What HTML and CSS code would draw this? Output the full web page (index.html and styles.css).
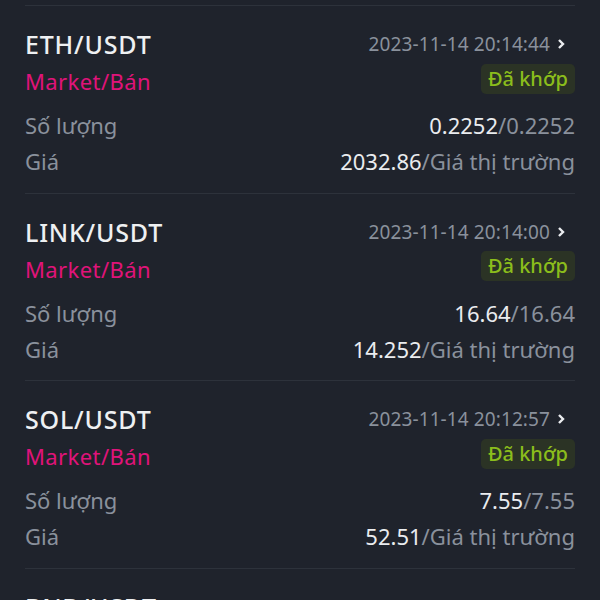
FILE: index.html
```html
<!DOCTYPE html>
<html lang="vi">
<head>
    <meta charset="UTF-8">
    <meta name="viewport" content="width=device-width, initial-scale=1.0">
    <title>Lịch sử lệnh</title>
    <link rel="stylesheet" href="styles.css">
</head>
<body>
    <div class="order-list">
        <div class="order">
            <div class="order-head">
                <span class="pair">ETH/USDT</span>
                <span class="time">2023-11-14 20:14:44 <svg class="chev" viewBox="0 0 10 12"><path d="M3 2l4 4-4 4" /></svg></span>
            </div>
            <div class="order-row">
                <span class="side">Market/Bán</span>
                <span class="badge">Đã khớp</span>
            </div>
            <div class="order-row info">
                <span class="label">Số lượng</span>
                <span class="value">0.2252<em>/0.2252</em></span>
            </div>
            <div class="order-row info">
                <span class="label">Giá</span>
                <span class="value">2032.86<em>/Giá thị trường</em></span>
            </div>
        </div>
        <div class="order">
            <div class="order-head">
                <span class="pair">LINK/USDT</span>
                <span class="time">2023-11-14 20:14:00 <svg class="chev" viewBox="0 0 10 12"><path d="M3 2l4 4-4 4" /></svg></span>
            </div>
            <div class="order-row">
                <span class="side">Market/Bán</span>
                <span class="badge">Đã khớp</span>
            </div>
            <div class="order-row info">
                <span class="label">Số lượng</span>
                <span class="value">16.64<em>/16.64</em></span>
            </div>
            <div class="order-row info">
                <span class="label">Giá</span>
                <span class="value">14.252<em>/Giá thị trường</em></span>
            </div>
        </div>
        <div class="order">
            <div class="order-head">
                <span class="pair">SOL/USDT</span>
                <span class="time">2023-11-14 20:12:57 <svg class="chev" viewBox="0 0 10 12"><path d="M3 2l4 4-4 4" /></svg></span>
            </div>
            <div class="order-row">
                <span class="side">Market/Bán</span>
                <span class="badge">Đã khớp</span>
            </div>
            <div class="order-row info">
                <span class="label">Số lượng</span>
                <span class="value">7.55<em>/7.55</em></span>
            </div>
            <div class="order-row info">
                <span class="label">Giá</span>
                <span class="value">52.51<em>/Giá thị trường</em></span>
            </div>
        </div>
        <div class="order">
            <div class="order-head">
                <span class="pair">BNB/USDT</span>
                <span class="time">2023-11-14 20:12:38 <svg class="chev" viewBox="0 0 10 12"><path d="M3 2l4 4-4 4" /></svg></span>
            </div>
        </div>
    </div>
</body>
</html>
```

FILE: styles.css
```css
/* Danh sách lệnh */
body {
    margin: 0;
    padding: 0;
    background-color: #1f232c;
    font-family: "Noto Sans", Roboto, sans-serif;
    overflow: hidden;
    height: 600px;
}
.order-list {
    padding: 5px 25px 0;
}
.order {
    border-top: 1px solid #2d323b;
    padding: 20px 0 13.5px;
    height: 153px;
}
.order-head, .order-row {
    display: flex;
    justify-content: space-between;
    align-items: center;
}
.order-head {
    height: 36px;
}
.pair {
    color: #eef0f2;
    font-size: 25px;
    font-weight: 500;
    letter-spacing: 0.8px;
}
.time {
    color: #8a919c;
    font-size: 19px;
    letter-spacing: 0.1px;
    display: flex;
    align-items: center;
    margin-right: 9px;
}
.chev {
    width: 10px;
    height: 12px;
    margin-left: 6px;
    fill: none;
    stroke: #eaecef;
    stroke-width: 2.4;
}
.order-row {
    height: 38px;
}
.side {
    color: #e0137a;
    font-size: 22px;
    letter-spacing: 0.4px;
}
.badge {
    background-color: #2b3325;
    color: #8bbd1c;
    font-size: 20px;
    font-weight: 500;
    padding: 1px 7px 2px;
    border-radius: 5px;
    margin-bottom: 5px;
}
.info {
    height: 36px;
}
.info:nth-child(3) {
    margin-top: 7px;
}
.label {
    color: #8a919c;
    font-size: 22px;
}
.value {
    color: #eaecef;
    font-size: 22px;
}
.value em {
    font-style: normal;
    color: #8a919c;
}
```
